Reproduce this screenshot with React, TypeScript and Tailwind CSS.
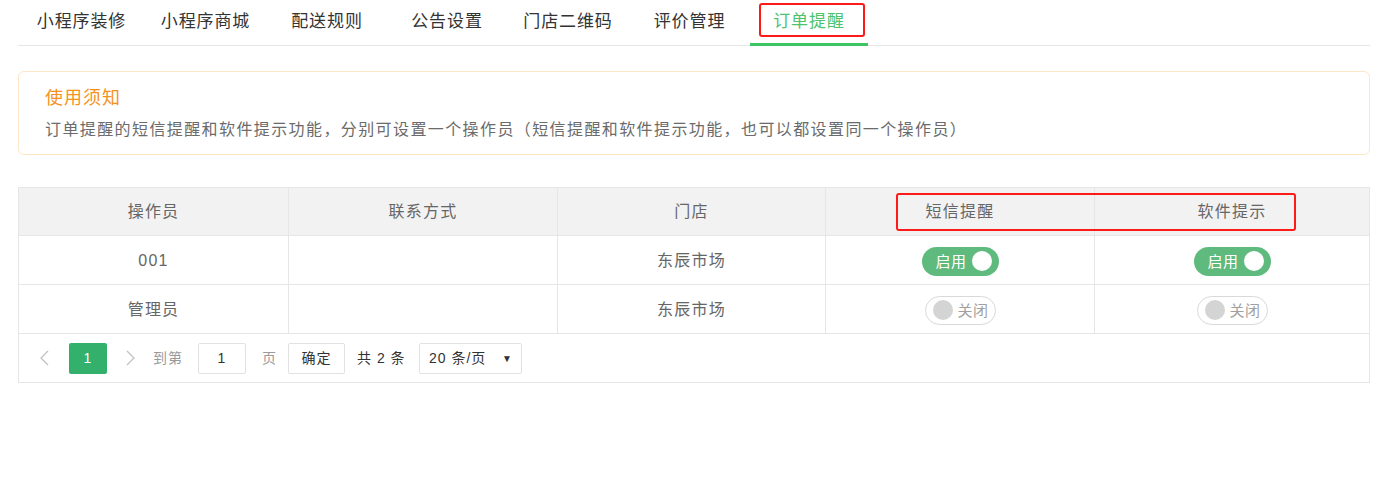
import React from "react";

const tabs = [
  { label: "小程序装修", w: "w-[125px]" },
  { label: "小程序商城", w: "w-[123px]" },
  { label: "配送规则", w: "w-[120px]" },
  { label: "公告设置", w: "w-[120px]" },
  { label: "门店二维码", w: "w-[122px]" },
  { label: "评价管理", w: "w-[121px]" },
];

const cols = "grid grid-cols-[270px_269px_268px_269px_1fr]";

function SwitchOn() {
  return (
    <div className="flex h-[29px] w-[77px] items-center justify-between rounded-full bg-[#5fba7d] pl-[14px] pr-[7px]">
      <span className="whitespace-nowrap text-[15px] leading-none tracking-[0.5px] text-white">启用</span>
      <span className="h-[20px] w-[20px] shrink-0 rounded-full bg-white" />
    </div>
  );
}

function SwitchOff() {
  return (
    <div className="flex h-[29px] w-[71px] items-center rounded-full border border-[#d9d9d9] bg-white pl-[7px]">
      <span className="h-[20px] w-[20px] shrink-0 rounded-full bg-[#d4d4d4]" />
      <span className="ml-[5px] whitespace-nowrap text-[15px] leading-none tracking-[0.5px] text-[#a0a0a0]">关闭</span>
    </div>
  );
}

function Cell({
  children,
  last,
  body,
}: {
  children?: React.ReactNode;
  last?: boolean;
  body?: boolean;
}) {
  return (
    <div
      className={
        "flex items-center justify-center " +
        (last ? "" : "border-r border-[#e6e6e6] ") +
        (body ? "pt-[2px]" : "")
      }
    >
      {children}
    </div>
  );
}

export default function App() {
  return (
    <div className="min-h-[491px] w-[1392px] bg-white font-['Liberation_Sans','Noto_Sans_CJK_SC',sans-serif] text-[#666]">
      <div className="ml-[18px] mr-[22px]">
        {/* Tabs */}
        <div className="flex h-[46px] border-b border-[#e6e6e6] pl-[1px]">
          {tabs.map((t) => (
            <div
              key={t.label}
              className={t.w + " flex h-[45px] items-center justify-center pb-[2px] text-[17px] tracking-[0.9px] text-[#333]"}
            >
              {t.label}
            </div>
          ))}
          <div className="relative flex h-[45px] w-[118px] items-center justify-center pb-[2px] text-[17px] tracking-[0.9px] text-[#4cc36c]">
            订单提醒
            <span className="absolute bottom-[-1px] left-0 right-0 h-[3px] bg-[#3fc463]" />
            <span className="absolute left-[9px] top-[3px] h-[34px] w-[106px] rounded-[3px] border-2 border-[#ff1a1a]" />
          </div>
        </div>

        {/* Notice */}
        <div className="mt-[25px] rounded-[6px] border border-[#fde7c6] pb-[12px] pl-[26px] pt-[14px]">
          <div className="text-[18px] leading-6 tracking-[1px] text-[#f5921e]">使用须知</div>
          <div className="mt-2 text-[16px] leading-6 tracking-[1.4px] text-[#6b6b6b]">
            订单提醒的短信提醒和软件提示功能，分别可设置一个操作员（短信提醒和软件提示功能，也可以都设置同一个操作员）
          </div>
        </div>

        {/* Table */}
        <div className="relative mt-[32px] border border-[#e6e6e6] text-[16px] tracking-[1.2px]">
          <div className={cols + " h-[48px] border-b border-[#e6e6e6] bg-[#f2f2f2]"}>
            <Cell>操作员</Cell>
            <Cell>联系方式</Cell>
            <Cell>门店</Cell>
            <Cell>短信提醒</Cell>
            <Cell last>软件提示</Cell>
          </div>
          <div className={cols + " h-[49px] border-b border-[#e6e6e6]"}>
            <Cell body>001</Cell>
            <Cell body />
            <Cell body>东辰市场</Cell>
            <Cell body>
              <SwitchOn />
            </Cell>
            <Cell body last>
              <SwitchOn />
            </Cell>
          </div>
          <div className={cols + " h-[49px] border-b border-[#e6e6e6]"}>
            <Cell body>管理员</Cell>
            <Cell body />
            <Cell body>东辰市场</Cell>
            <Cell body>
              <SwitchOff />
            </Cell>
            <Cell body last>
              <SwitchOff />
            </Cell>
          </div>

          {/* Pagination */}
          <div className="flex h-[48px] items-center text-[14px] tracking-[1px]">
            <div className="flex w-[50px] justify-center">
              <svg width="9" height="16" viewBox="0 0 9 16" fill="none">
                <polyline points="8,1 1,8 8,15" stroke="#c2c2c2" strokeWidth="1.3" />
              </svg>
            </div>
            <div className="flex h-[31px] w-[38px] items-center justify-center rounded-[2px] bg-[#33b16c] text-white">
              1
            </div>
            <div className="flex w-[46px] justify-center">
              <svg width="9" height="16" viewBox="0 0 9 16" fill="none">
                <polyline points="1,1 8,8 1,15" stroke="#c2c2c2" strokeWidth="1.3" />
              </svg>
            </div>
            <span className="w-[45px] text-[#9a9a9a]">到第</span>
            <div className="flex h-[31px] w-[48px] items-center justify-center rounded-[2px] border border-[#e2e2e2] text-[#333]">
              1
            </div>
            <span className="w-[42px] pl-[16px] text-[#9a9a9a]">页</span>
            <div className="flex h-[31px] w-[57px] items-center justify-center rounded-[2px] border border-[#e2e2e2] text-[#333]">
              确定
            </div>
            <span className="w-[74px] pl-[12px] text-[#333]">共 2 条</span>
            <div className="flex h-[31px] w-[103px] items-center justify-between rounded-[2px] border border-[#e2e2e2] pl-[9px] pr-[8px] text-[#333]">
              <span>20 条/页</span>
              <span className="text-[10px]">▼</span>
            </div>
          </div>

          <span className="absolute left-[877px] top-[5px] h-[38px] w-[400px] rounded-[3px] border-2 border-[#ff1a1a]" />
        </div>
      </div>
    </div>
  );
}
